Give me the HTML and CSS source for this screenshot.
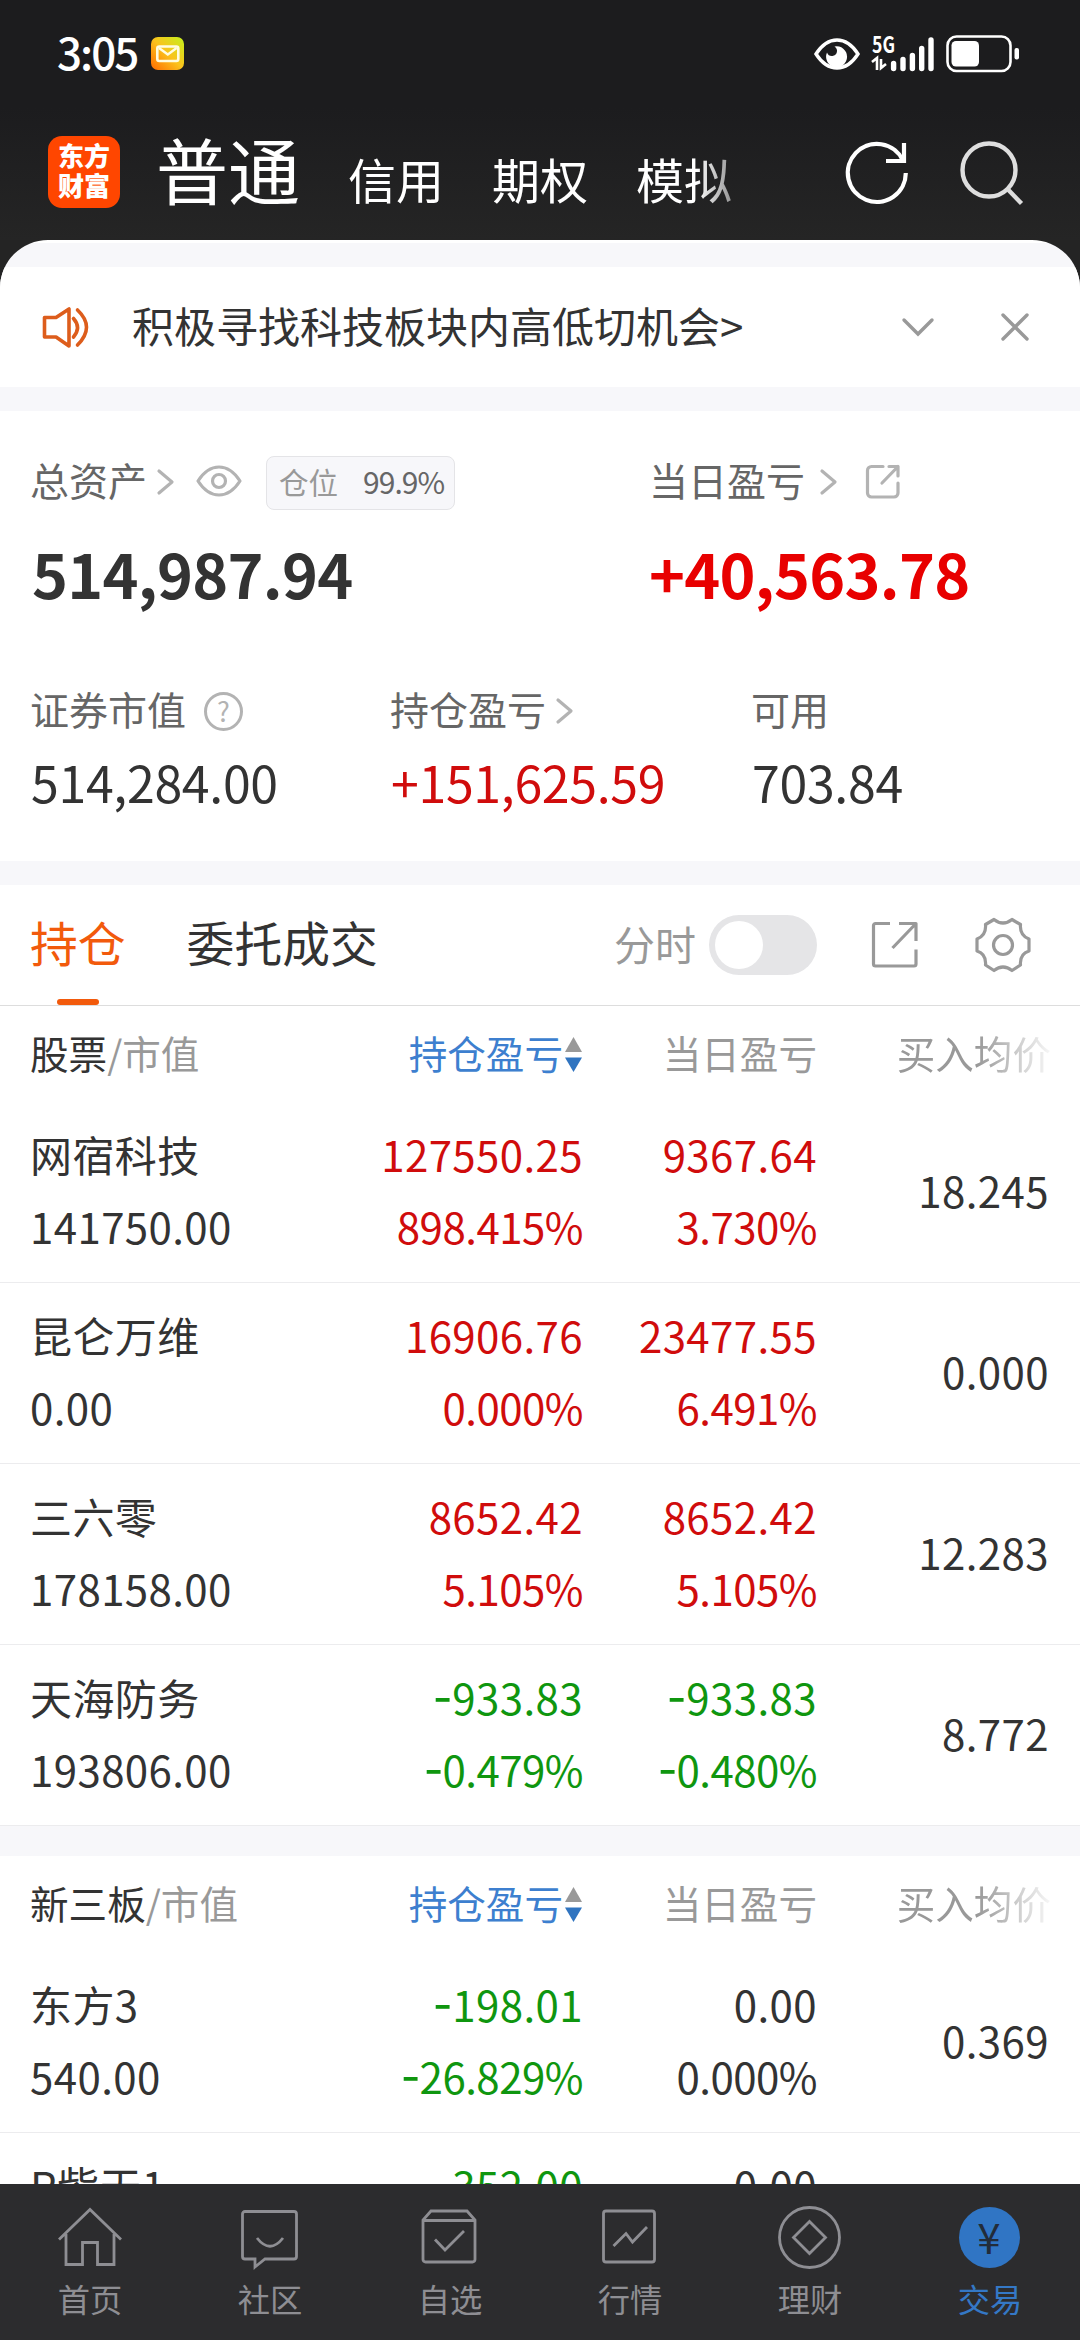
FILE: index.html
```html
<!DOCTYPE html>
<html lang="zh-CN">
<head>
    <meta charset="UTF-8">
    <meta name="viewport" content="width=device-width, initial-scale=1.0">
    <title>东方财富 - 交易</title>
    <link rel="stylesheet" href="styles.css">
</head>
<body>
    <header class="top">
        <div class="status-bar">
            <span class="time">3:05</span>
            <svg class="mail" width="33" height="33" viewBox="0 0 33 33">
                <defs>
                    <linearGradient id="mailBg" x1="0" y1="1" x2="1" y2="0">
                        <stop offset="0" stop-color="#ff6a00"/>
                        <stop offset="0.5" stop-color="#fbc21c"/>
                        <stop offset="1" stop-color="#c4f11c"/>
                    </linearGradient>
                </defs>
                <rect width="33" height="33" rx="7" fill="url(#mailBg)"/>
                <rect x="6.300" y="9.500" width="21" height="14.500" rx="2" fill="none" stroke="#fffce0" stroke-width="2.600"/>
                <path d="M8 11l8.800 6.500 8.800-6.500" fill="none" stroke="#fffce0" stroke-width="2.400"/>
            </svg>
            <div class="status-icons">
                <svg width="46" height="34" viewBox="0 0 46 34">
                    <path d="M2 17Q11 3 23 3t21 14Q35 31 23 31T2 17z" fill="none" stroke="#fff" stroke-width="3.400"/>
                    <path d="M20.500 9.500a10.500 10.500 0 1 1-7.500 6q1.500 4 5.500 3.500 5-1 4.500-6-.5-2.500-2.500-3.500z" fill="#fff"/>
                </svg>
                <svg class="signal" width="64" height="38" viewBox="0 0 64 38">
                    <text class="net" x="1" y="18" textLength="23" lengthAdjust="spacingAndGlyphs">5G</text>
                    <path d="M1 27l5-4v12M15 29l-5 4V24" fill="none" stroke="#fff" stroke-width="2.600"/>
                    <path d="M22.600 28.500v5M32 24.500v9M41.400 20.500v13M50.700 13.500v20M60 5v28.500" stroke="#fff" stroke-width="5.400" stroke-linecap="round"/>
                </svg>
                <svg class="battery" width="74" height="38" viewBox="0 0 74 38">
                    <rect x="1.500" y="1.500" width="63" height="34.500" rx="9" fill="none" stroke="#fff" stroke-width="2.600"/>
                    <rect x="5.500" y="6" width="27.500" height="25.500" rx="4.500" fill="#fff"/>
                    <rect x="68.500" y="13" width="4.500" height="11.500" rx="2" fill="#fff"/>
                </svg>
            </div>
        </div>
        <div class="title-bar">
            <div class="logo">东方<br>财富</div>
            <nav class="accounts">
                <span class="current">普通</span>
                <span>信用</span>
                <span>期权</span>
                <span>模拟</span>
            </nav>
            <svg class="refresh" width="66" height="66" viewBox="0 0 66 66">
                <path d="M61.800 34A29 29 0 1 1 59 21.500" fill="none" stroke="#fff" stroke-width="4.200"/>
                <path d="M60 4v18H42" fill="none" stroke="#fff" stroke-width="4.200"/>
            </svg>
            <svg class="search" width="66" height="66" viewBox="0 0 66 66">
                <circle cx="30" cy="29" r="26.500" fill="none" stroke="#dedede" stroke-width="4.400"/>
                <path d="M48.500 48l14 14.500" stroke="#dedede" stroke-width="4.400"/>
            </svg>
        </div>
    </header>

    <main class="sheet">
        <section class="notice">
            <svg width="50" height="44" viewBox="0 0 50 44" fill="none" stroke="#dd5d1c" stroke-width="3.600" stroke-linejoin="round" stroke-linecap="round">
                <path d="M3.500 12.500h11.500L28 4v37L15 32H3.500z"/>
                <path d="M32.500 13.500q8 9 0 18.500M36.500 5q18 17 0 35"/>
            </svg>
            <p>积极寻找科技板块内高低切机会&gt;</p>
            <svg class="fold" width="34" height="20" viewBox="0 0 34 20"><path d="M3 3l14 14L31 3"/></svg>
            <svg class="close" width="30" height="30" viewBox="0 0 30 30"><path d="M3 3l24 24M27 3L3 27"/></svg>
        </section>

        <section class="assets">
            <div class="assets-main">
                <div class="asset">
                    <div class="asset-label">
                        总资产
                        <svg class="arrow" width="18" height="28" viewBox="0 0 18 28"><path d="M2 3l13 11L2 25"/></svg>
                        <svg class="eye" width="46" height="34" viewBox="0 0 46 34">
                            <path d="M2 17Q11 3 23 3t21 14Q35 31 23 31T2 17z"/>
                            <circle cx="23" cy="17" r="6.500"/>
                        </svg>
                        <span class="position">仓位 <b>99.9%</b></span>
                    </div>
                    <div class="big">514,987.94</div>
                </div>
                <div class="asset">
                    <div class="asset-label">
                        当日盈亏
                        <svg class="arrow wide" width="18" height="28" viewBox="0 0 18 28"><path d="M2 3l13 11L2 25"/></svg>
                        <svg class="share" width="36" height="36" viewBox="0 0 36 36">
                            <path d="M18 2.500H6.500a4 4 0 0 0-4 4V29a4 4 0 0 0 4 4H29a4 4 0 0 0 4-4V19M24 2.500h9V12M33 2.500L17 19"/>
                        </svg>
                    </div>
                    <div class="big profit">+40,563.78</div>
                </div>
            </div>
            <div class="assets-sub">
                <div class="asset">
                    <div class="asset-label">证券市值
                        <span class="help">?</span>
                    </div>
                    <div class="mid">514,284.00</div>
                </div>
                <div class="asset">
                    <div class="asset-label">持仓盈亏
                        <svg class="arrow" width="18" height="28" viewBox="0 0 18 28"><path d="M2 3l13 11L2 25"/></svg>
                    </div>
                    <div class="mid red">+151,625.59</div>
                </div>
                <div class="asset">
                    <div class="asset-label">可用</div>
                    <div class="mid">703.84</div>
                </div>
            </div>
        </section>

        <section class="tabs">
            <span class="tab active">持仓</span>
            <span class="tab">委托成交</span>
            <div class="tools">
                <span class="tools-label">分时</span>
                <i class="switch"></i>
                <svg width="48" height="48" viewBox="0 0 48 48" class="export">
                    <path d="M19 2.500H4.500a2 2 0 0 0-2 2V43a2 2 0 0 0 2 2H43a2 2 0 0 0 2-2V28.500M28 2.500h17V20M45 2.500L21.500 27"/>
                </svg>
                <svg width="56" height="56" viewBox="0 0 56 56" class="gear">
                    <path d="M19 2.500q9 7 18 0l8.500 5q-1 11 8.500 14.500v12q-9.500 3-8.500 14l-8.500 5.500q-9-7-18 0L10.500 48q1-11-8.500-14V22q9.500-3.500 8.500-14.500z"/>
                    <circle cx="28" cy="28" r="9.500"/>
                </svg>
            </div>
        </section>

        <section class="holdings">
            <div class="row head">
                <div><em>股票</em>/市值</div>
                <div class="sorted">持仓盈亏<svg width="17" height="36" viewBox="0 0 17 36"><path d="M8.500 0L17 15H0z" fill="#999"/><path d="M8.500 35L17 20.500H0z" fill="#3074c0"/></svg></div>
                <div>当日盈亏</div>
                <div class="fade">买入均价</div>
            </div>
            <div class="row">
                <div><p>网宿科技</p><p>141750.00</p></div>
                <div class="red"><p>127550.25</p><p class="pct">898.415%</p></div>
                <div class="red"><p>9367.64</p><p class="pct">3.730%</p></div>
                <div class="price">18.245</div>
            </div>
            <div class="row">
                <div><p>昆仑万维</p><p>0.00</p></div>
                <div class="red"><p>16906.76</p><p class="pct">0.000%</p></div>
                <div class="red"><p>23477.55</p><p class="pct">6.491%</p></div>
                <div class="price">0.000</div>
            </div>
            <div class="row">
                <div><p>三六零</p><p>178158.00</p></div>
                <div class="red"><p>8652.42</p><p class="pct">5.105%</p></div>
                <div class="red"><p>8652.42</p><p class="pct">5.105%</p></div>
                <div class="price">12.283</div>
            </div>
            <div class="row">
                <div><p>天海防务</p><p>193806.00</p></div>
                <div class="green"><p><i>-</i>933.83</p><p class="pct"><i>-</i>0.479%</p></div>
                <div class="green"><p><i>-</i>933.83</p><p class="pct"><i>-</i>0.480%</p></div>
                <div class="price">8.772</div>
            </div>
        </section>

        <section class="holdings">
            <div class="row head">
                <div><em>新三板</em>/市值</div>
                <div class="sorted">持仓盈亏<svg width="17" height="36" viewBox="0 0 17 36"><path d="M8.500 0L17 15H0z" fill="#999"/><path d="M8.500 35L17 20.500H0z" fill="#3074c0"/></svg></div>
                <div>当日盈亏</div>
                <div class="fade">买入均价</div>
            </div>
            <div class="row">
                <div><p>东方3</p><p>540.00</p></div>
                <div class="green"><p><i>-</i>198.01</p><p class="pct"><i>-</i>26.829%</p></div>
                <div><p>0.00</p><p class="pct">0.000%</p></div>
                <div class="price">0.369</div>
            </div>
            <div class="row last">
                <div><p>R紫天1</p></div>
                <div class="green"><p><i>-</i>352.00</p></div>
                <div><p>0.00</p></div>
            </div>
        </section>
    </main>

    <footer class="nav">
        <a>
            <svg viewBox="0 0 64 64"><path d="M1 34.500L32 4.500l31 30M8 29v30.500h16.500V37.500h15v22H56V29"/></svg>
            <span>首页</span>
        </a>
        <a>
            <svg viewBox="0 0 64 64"><path d="M7 6.500h49a2.500 2.500 0 0 1 2.500 2.500v42.500a2.500 2.500 0 0 1-2.500 2.500H27l-10 8v-8H7a2.500 2.500 0 0 1-2.500-2.500V9A2.500 2.500 0 0 1 7 6.500zM19 33q13 16.500 26 0"/></svg>
            <span>社区</span>
        </a>
        <a>
            <svg viewBox="0 0 64 64"><path d="M13 6h36l8 9v39.500a2.500 2.500 0 0 1-2.500 2.500H7.500a2.500 2.500 0 0 1-2.500-2.500V15zM5 15.500h52M17 34.500l10 10.500 19-19"/></svg>
            <span>自选</span>
        </a>
        <a>
            <svg viewBox="0 0 64 64"><rect x="5.500" y="6" width="51" height="51" rx="2.500"/><path d="M15.500 41l12.500-12.500 6.500 8.500 14.500-15"/></svg>
            <span>行情</span>
        </a>
        <a>
            <svg viewBox="0 0 64 64"><circle cx="31.500" cy="32.500" r="30"/><path d="M31.500 16.500l16 16-16 16-16-16z"/></svg>
            <span>理财</span>
        </a>
        <a class="on">
            <b class="coin">¥</b>
            <span>交易</span>
        </a>
    </footer>
</body>
</html>
```
FILE: styles.css
```css
* {
    box-sizing: border-box;
}
body {
    margin: 0;
    width: 1080px;
    height: 2340px;
    display: flex;
    flex-direction: column;
    overflow: hidden;
    background: #242424;
    font-family: "Noto Sans CJK SC", sans-serif;
    font-size: 42px;
    color: #333;
}
p {
    margin: 0;
}
svg {
    display: block;
    flex: none;
    overflow: visible;
}

/* header */
.top {
    height: 240px;
    flex: none;
    background: linear-gradient(#1c1c1e 45%, #252525);
    color: #fff;
}
.status-bar {
    display: flex;
    align-items: center;
    height: 107px;
    padding: 0 60px 0 57px;
}
.time {
    width: 94px;
    font-size: 44px;
    font-weight: 500;
    line-height: 60px;
    letter-spacing: -2px;
    margin-top: -5px;
}
.status-icons {
    display: flex;
    align-items: center;
    margin-left: auto;
}
.signal {
    margin-left: 11px;
}
.battery {
    margin-left: 11px;
}
.net {
    font-size: 23px;
    font-weight: 700;
    fill: #fff;
}
.title-bar {
    display: flex;
    align-items: center;
    height: 130px;
    padding: 0 55px 0 48px;
}
.logo {
    width: 72px;
    height: 72px;
    padding-top: 4px;
    border-radius: 14px;
    background: #ff4600;
    font-size: 26px;
    font-weight: 900;
    line-height: 30px;
    text-align: center;
}
.accounts {
    display: flex;
    align-items: baseline;
    gap: 48px;
    width: 660px;
    margin: -10px 0 0 36px;
    font-size: 48px;
    white-space: nowrap;
    -webkit-mask-image: linear-gradient(90deg, #000 540px, transparent 615px);
    mask-image: linear-gradient(90deg, #000 540px, transparent 615px);
}
.accounts .current {
    font-size: 72px;
}
.refresh {
    margin-left: 28px;
}
.search {
    margin: 3px 0 0 auto;
}

/* white sheet */
.sheet {
    flex: 1;
    min-height: 0;
    overflow: hidden;
    padding-top: 27px;
    border-radius: 48px 48px 0 0;
    background: linear-gradient(#fff 3px, #f7f7fa 3px);
}
.notice {
    display: flex;
    align-items: center;
    height: 120px;
    padding: 0 50px 0 41px;
    background: #fff;
}
.notice p {
    margin: -5px 0 0 41px;
    flex: 1;
}
.fold, .close {
    fill: none;
    stroke: #999;
    stroke-width: 3.4;
    stroke-linecap: round;
}
.close {
    margin-left: 65px;
}

/* assets */
.assets {
    height: 450px;
    margin-top: 24px;
    padding: 33px 30px 0;
    background: #fff;
}
.assets-main {
    display: grid;
    grid-template-columns: 619px 1fr;
}
.assets-sub {
    display: grid;
    grid-template-columns: 360px 361px 1fr;
    margin-top: 60px;
}
.asset-label {
    display: flex;
    align-items: center;
    height: 70px;
    font-size: 39px;
    line-height: 70px;
    color: #666;
}
.arrow, .eye, .share {
    fill: none;
    stroke: #b3b3b3;
    stroke-width: 3.2;
    stroke-linecap: round;
    stroke-linejoin: round;
}
.arrow {
    margin: 5px 0 0 10px;
}
.arrow.wide {
    margin-left: 15px;
}
.eye {
    margin: 3px 0 0 21px;
}
.share {
    margin: 5px 0 0 27px;
}
.help {
    width: 39px;
    height: 39px;
    margin: 6px 0 0 18px;
    border: 3px solid #b3b3b3;
    border-radius: 50%;
    font-size: 27px;
    line-height: 31px;
    text-align: center;
    color: #b3b3b3;
}
.position {
    display: flex;
    align-items: center;
    justify-content: space-between;
    width: 189px;
    height: 54px;
    margin: 7px 0 0 24px;
    padding: 0 10px 4px 12px;
    border: 1px solid #e4e4e7;
    border-radius: 8px;
    background: #f7f7fa;
    font-size: 29.5px;
    line-height: 48px;
    color: #999;
}
.position b {
    font-weight: 400;
    font-size: 30px;
    letter-spacing: -1px;
    color: #666;
}
.big {
    margin: 19px 0 0 2px;
    font-size: 61px;
    font-weight: 700;
    line-height: 80px;
    letter-spacing: -0.7px;
}
.mid {
    margin: 6px 0 0 1px;
    font-size: 50px;
    line-height: 64px;
    letter-spacing: -0.3px;
}
.big.profit {
    margin-left: 0;
    color: #e80000;
}
.red {
    color: #d00c0c;
}
.green {
    color: #0f960f;
}

/* tabs */
.tabs {
    display: flex;
    align-items: center;
    height: 121px;
    margin-top: 24px;
    padding: 0 49px 0 30px;
    border-bottom: 1px solid #ddd;
    background: #fff;
}
.tab {
    position: relative;
    margin-right: 61px;
    font-size: 47.8px;
    line-height: 114px;
    height: 120px;
}
.tab.active {
    color: #f25a0c;
}
.tab.active::after {
    content: "";
    position: absolute;
    left: 27px;
    bottom: 0;
    width: 42px;
    height: 6px;
    border-radius: 3px;
    background: #f25a0c;
}
.tools {
    display: flex;
    align-items: center;
    margin-left: auto;
    font-size: 41px;
    color: #999;
}
.tools-label {
    margin-top: -5px;
}
.switch {
    width: 108px;
    height: 60px;
    margin-left: 13px;
    padding: 6px;
    border-radius: 30px;
    background: #e5e5e7;
}
.switch::after {
    content: "";
    display: block;
    width: 48px;
    height: 48px;
    border-radius: 50%;
    background: #fff;
}
.export, .gear {
    fill: none;
    stroke: #999;
    stroke-width: 3.2;
    stroke-linejoin: round;
}
.export {
    margin-left: 54px;
}
.gear {
    margin-left: 56px;
}

/* holdings table */
.holdings {
    background: #fff;
}
.holdings + .holdings {
    margin-top: 30px;
}
.row {
    display: grid;
    grid-template-columns: 306px 247px 234px 232px;
    align-items: center;
    height: 181px;
    padding: 0 30px;
    border-bottom: 1px solid #ececee;
    line-height: 72px;
    letter-spacing: 0.4px;
    text-align: right;
}
.row > div:first-child {
    text-align: left;
}
.row p, .price {
    position: relative;
    top: -2px;
}
.row p.pct {
    letter-spacing: -0.5px;
}
.row i {
    font-size: 54px;
    font-style: normal;
    line-height: 0;
}
.row.last {
    align-items: start;
    padding-top: 18px;
}
.row.head {
    height: 96px;
    border: 0;
    font-size: 38.6px;
    letter-spacing: 0;
    color: #999;
    padding-bottom: 4px;
}
.row.head em {
    font-style: normal;
    color: #333;
}
.sorted {
    display: flex;
    justify-content: flex-end;
    align-items: center;
    color: #3d7fcf;
}
.sorted svg {
    margin: 5px 1px 0 2px;
}
.fade {
    margin-right: -2px;
    -webkit-mask-image: linear-gradient(90deg, #000 160px, transparent 240px);
    mask-image: linear-gradient(90deg, #000 160px, transparent 240px);
}

/* bottom navigation */
.nav {
    display: flex;
    flex: none;
    height: 156px;
    padding-top: 21px;
    background: #2c2c2e;
}
.nav a {
    flex: 1;
    display: flex;
    flex-direction: column;
    align-items: center;
    font-size: 32.3px;
    line-height: 58px;
    color: #8e8e93;
}
.nav svg {
    width: 64px;
    height: 64px;
    fill: none;
    stroke: #8e8e93;
    stroke-width: 2.8;
}
.nav .on {
    color: #3478c6;
}
.coin {
    width: 61px;
    height: 61px;
    margin: 2px 2px 1px 0;
    border-radius: 50%;
    background: #3075c4;
    color: #222c3a;
    font-size: 42px;
    font-weight: 400;
    text-align: center;
}
```
